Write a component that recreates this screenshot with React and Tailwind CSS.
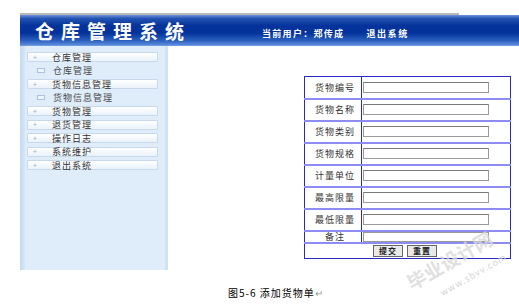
import React from "react";

const menu = [
  { label: "仓库管理", sub: false },
  { label: "仓库管理", sub: true },
  { label: "货物信息管理", sub: false },
  { label: "货物信息管理", sub: true },
  { label: "货物管理", sub: false },
  { label: "退货管理", sub: false },
  { label: "操作日志", sub: false },
  { label: "系统维护", sub: false },
  { label: "退出系统", sub: false },
];

const fields = ["货物编号", "货物名称", "货物类别", "货物规格", "计量单位", "最高限量", "最低限量"];

const font = { fontFamily: '"Noto Sans CJK SC", "Noto Sans", sans-serif' };

export default function App() {
  return (
    <div className="relative w-[519px] h-[304px] bg-white overflow-hidden" style={font}>
      {/* header */}
      <div className="pt-[13px] pl-[20px]">
        <div className="h-[2px] w-[439px] bg-[#b8b8b8]" />
        <div className="flex h-[31px] items-center bg-[linear-gradient(to_bottom,#6f92d8_0%,#2453b2_12%,#04349b_35%,#03339a_60%,#2a5fbf_85%,#5a8ad9_100%)] border-b border-[#6d9ae0]">
          <span className="ml-[15px] w-[227px] text-[19px] font-bold tracking-[7px] text-white leading-none">仓库管理系统</span>
          <span className="mt-[6px] text-[9px] font-bold tracking-[1.3px] text-white leading-none">当前用户：郑传成</span>
          <span className="mt-[6px] ml-[22px] text-[9px] font-bold tracking-[1.6px] text-white leading-none">退出系统</span>
        </div>
      </div>

      <div className="flex">
        {/* sidebar */}
        <div className="ml-[20px] flex h-[224px] w-[148px] bg-[#dfecfa]">
          <div className="w-[5px] bg-[linear-gradient(to_right,#c4d9f0,#d7e7f8)]" />
          <div className="flex w-[140px] flex-col gap-[3.5px] pt-[6px] pl-[2px]">
            {menu.map((m, i) =>
              m.sub ? (
                <div key={i} className="flex h-[10px] items-center">
                  <span className="ml-[10px] h-[5px] w-[8px] border border-[#a9c3e2] bg-[#eef5fd]" />
                  <span className="ml-[8px] text-[9px] tracking-[1px] leading-none text-[#4a4a4a]">{m.label}</span>
                </div>
              ) : (
                <div
                  key={i}
                  className="flex h-[10px] w-[131px] items-center rounded-[1px] border border-[#c9d9ec] bg-[linear-gradient(to_bottom,#ffffff,#eaf2fb)]"
                >
                  <span className="ml-[5px] text-[7px] leading-none text-[#9ab0cc]">+</span>
                  <span className="ml-[15px] text-[9px] tracking-[1px] leading-none text-[#333]">{m.label}</span>
                </div>
              )
            )}
          </div>
          <div className="ml-auto w-[3px] bg-[#cfe2f6]" />
        </div>

        {/* form */}
        <div className="ml-[136px] mt-[30px]">
          <table className="w-[207px] border-collapse border border-[#2a2ac4]">
            <tbody>
              {fields.map((f) => (
                <tr key={f} className="h-[22px] border-b-2 border-[#8c8cf2]">
                  <td className="w-[57px] border-r border-[#2a2ac4] p-0 pl-[4px] text-center text-[9px] tracking-[1px] leading-none text-[#333]">
                    {f}
                  </td>
                  <td className="p-0 pl-[1px]">
                    <div className="h-[11px] w-[126px] border border-[#9a9a9a] border-t-[#7a7a7a] bg-white" />
                  </td>
                </tr>
              ))}
              <tr className="h-[12px] border-b-2 border-[#8c8cf2]">
                <td className="border-r border-[#2a2ac4] p-0 pl-[4px] text-center text-[9px] tracking-[1px] leading-none text-[#333]">备注</td>
                <td className="p-0 pl-[1px]">
                  <div className="h-[10px] w-[126px] border border-[#9a9a9a] bg-white" />
                </td>
              </tr>
              <tr className="h-[16px]">
                <td colSpan={2} className="p-0">
                  <div className="ml-[68px] flex gap-[4px]">
                    <button className="h-[12px] w-[30px] border border-[#666] bg-[#e9e9e9] text-[8px] font-bold tracking-[1px] leading-none text-[#222]">提交</button>
                    <button className="h-[12px] w-[30px] border border-[#666] bg-[#e9e9e9] text-[8px] font-bold tracking-[1px] leading-none text-[#222]">重置</button>
                  </div>
                </td>
              </tr>
            </tbody>
          </table>
        </div>
      </div>

      {/* caption */}
      <div className="mt-[18px] pl-[228px] text-[10px] tracking-[1px] leading-none text-black">
        图5-6 添加货物单<span className="text-[#999]">↵</span>
      </div>

      {/* watermark */}
      <div className="pointer-events-none absolute left-[402px] top-[246px] -rotate-[30deg] text-[19px] font-bold text-[#d9d9d9] opacity-80">
        毕业设计网
      </div>
      <div className="pointer-events-none absolute left-[436px] top-[268px] -rotate-[30deg] text-[9px] tracking-[1px] text-[#d4d4d4]">
        www.sbvv.com
      </div>
    </div>
  );
}
